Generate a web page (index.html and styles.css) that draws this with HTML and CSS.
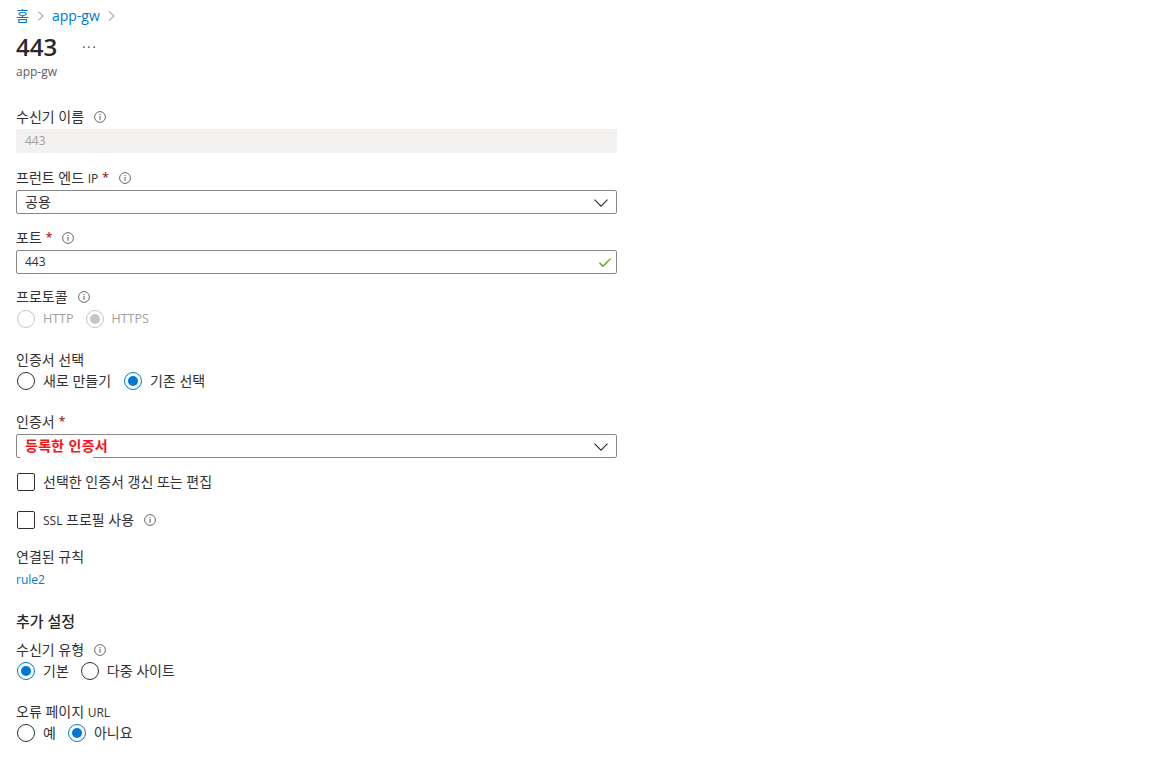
FILE: index.html
```html
<!DOCTYPE html>
<html lang="ko">
<head>
    <meta charset="UTF-8">
    <title>443 - app-gw</title>
    <link rel="stylesheet" href="styles.css">
</head>
<body>

<svg class="defs">
    <symbol id="info" viewBox="0 0 12 12">
        <circle cx="6" cy="6" r="5.4" fill="none" stroke="#6b6a69" stroke-width="1"/>
        <rect x="5.5" y="5" width="1.1" height="3.8" fill="#6b6a69"/>
        <rect x="5.5" y="3" width="1.1" height="1.2" fill="#6b6a69"/>
    </symbol>
    <symbol id="chevron" viewBox="0 0 14 8">
        <path d="M.5.7 7 7.2 13.5.7" fill="none" stroke="#2b2a29" stroke-width="1.1"/>
    </symbol>
</svg>

<nav class="breadcrumb">
    <a href="#">홈</a>
    <svg class="crumb-sep" viewBox="0 0 7 12"><path d="M1 1.5l5 4.5-5 4.5" fill="none" stroke="#8a8886"/></svg>
    <a href="#">app-gw</a>
    <svg class="crumb-sep" viewBox="0 0 7 12"><path d="M1 1.5l5 4.5-5 4.5" fill="none" stroke="#8a8886"/></svg>
</nav>

<div class="title-row">
    <h1>443</h1>
    <span class="more">···</span>
</div>
<div class="subtitle">app-gw</div>

<form class="form">
    <div class="label first"><span>수신기 이름</span><svg class="info"><use href="#info"/></svg></div>
    <div class="input readonly lat">443</div>

    <div class="label mt17"><span>프런트 엔드 <span class="lat">IP</span></span><span class="req">*</span><svg class="info"><use href="#info"/></svg></div>
    <div class="input">공용<svg class="chev"><use href="#chevron"/></svg></div>

    <div class="label mt16"><span>포트</span><span class="req">*</span><svg class="info"><use href="#info"/></svg></div>
    <div class="input lat">443<svg class="check" viewBox="0 0 12 9"><path d="M.5 4.8 3.9 8.3 11.5.6" fill="none" stroke="#57a300" stroke-width="1.3"/></svg></div>

    <div class="label mt15"><span>프로토콜</span><svg class="info"><use href="#info"/></svg></div>
    <div class="radios mt5 tight disabled">
        <label class="radio lat"><span class="dot"></span>HTTP</label>
        <label class="radio lat on"><span class="dot"></span>HTTPS</label>
    </div>

    <div class="label mt24"><span>인증서 선택</span></div>
    <div class="radios mt4">
        <label class="radio"><span class="dot"></span>새로 만들기</label>
        <label class="radio on"><span class="dot"></span>기존 선택</label>
    </div>

    <div class="label mt24"><span>인증서</span><span class="req">*</span></div>
    <div class="input cert"><span class="cert-name">등록한 인증서</span><svg class="chev"><use href="#chevron"/></svg></div>

    <label class="checkbox mt15"><span class="box"></span>선택한 인증서 갱신 또는 편집</label>
    <label class="checkbox mt20"><span class="box"></span><span><span class="lat">SSL</span> 프로필 사용</span><svg class="info"><use href="#info"/></svg></label>

    <div class="label mt20"><span>연결된 규칙</span></div>
    <a class="rule lat" href="#">rule2</a>

    <h2>추가 설정</h2>

    <div class="label mt13"><span>수신기 유형</span><svg class="info"><use href="#info"/></svg></div>
    <div class="radios mt4 tight">
        <label class="radio on"><span class="dot"></span>기본</label>
        <label class="radio"><span class="dot"></span>다중 사이트</label>
    </div>

    <div class="label mt24"><span>오류 페이지 <span class="lat">URL</span></span></div>
    <div class="radios mt4 tight">
        <label class="radio"><span class="dot"></span>예</label>
        <label class="radio on"><span class="dot"></span>아니요</label>
    </div>
</form>

</body>
</html>
```

FILE: styles.css
```css
body {
    margin: 0;
    padding: 8px 16px 0;
    background-color: #fff;
    color: #323130;
    font-family: "Open Sans", "Noto Sans CJK KR", sans-serif;
    font-size: 14px;
}

a {
    color: #0078d4;
    text-decoration: none;
}

/* Latin text runs smaller than the hangul around it */
.lat {
    font-size: 12px;
}

.defs {
    display: none;
}

/* Header */
.breadcrumb {
    display: flex;
    align-items: center;
    height: 16px;
    gap: 8px;
    line-height: 16px;
}

.crumb-sep {
    width: 7px;
    height: 12px;
}

.title-row {
    display: flex;
    align-items: center;
    height: 32px;
    margin-top: 7px;
}

h1 {
    margin: 0;
    font-size: 24px;
    font-weight: 600;
    line-height: 32px;
    color: #292827;
}

.more {
    margin-left: 25px;
    font-size: 12px;
    letter-spacing: 2px;
}

.subtitle {
    margin-top: 1px;
    font-size: 12px;
    line-height: 16px;
    color: #605e5c;
}

/* Form */
.form {
    width: 601px;
}

.label {
    display: flex;
    align-items: center;
    height: 16px;
    line-height: 16px;
    white-space: pre;
}

.first { margin-top: 29px; margin-bottom: 4px; }
.mt4 { margin-top: 4px; }
.mt5 { margin-top: 5px; }
.mt13 { margin-top: 13px; }
.mt15 { margin-top: 15px; }
.mt16 { margin-top: 16px; }
.mt17 { margin-top: 17px; }
.mt20 { margin-top: 20px; }
.mt24 { margin-top: 24px; }

.label + .input {
    margin-top: 4px;
}

.req {
    margin-left: 4px;
    color: #a4262c;
    font-size: 12px;
    font-weight: 600;
}

.info {
    width: 12px;
    height: 12px;
    margin-left: 10px;
    flex: none;
}

.input {
    position: relative;
    display: flex;
    align-items: center;
    box-sizing: border-box;
    height: 24px;
    padding: 0 8px;
    border: 1px solid #8a8886;
    border-radius: 2px;
    line-height: 22px;
}

.readonly {
    border-color: #f3f2f1;
    background-color: #f3f2f1;
    color: #a19f9d;
}

.chev {
    position: absolute;
    top: 8px;
    right: 8px;
    width: 14px;
    height: 8px;
}

.check {
    position: absolute;
    top: 7px;
    right: 5px;
    width: 12px;
    height: 9px;
}

/* Redacted value: a patch hides part of the bottom border */
.cert-name {
    color: #f5141e;
    font-size: 14px;
    font-weight: 700;
    letter-spacing: .3px;
}

.cert::after {
    content: "";
    position: absolute;
    left: 3px;
    bottom: -1px;
    width: 73px;
    height: 2px;
    background-color: #fff;
}

/* Radios */
.radios {
    display: flex;
    gap: 13px;
    padding-left: 1px;
}

.radios.tight {
    gap: 12px;
}

.radio,
.checkbox {
    display: flex;
    align-items: center;
    height: 18px;
    line-height: 18px;
    white-space: pre;
}

.radio.lat {
    font-size: 12.5px;
}

.dot {
    box-sizing: border-box;
    display: flex;
    align-items: center;
    justify-content: center;
    width: 18px;
    height: 18px;
    margin-right: 8px;
    border: 1px solid #323130;
    border-radius: 50%;
}

.radio.on .dot {
    border-color: #0078d4;
}

.radio.on .dot::after {
    content: "";
    width: 10px;
    height: 10px;
    border-radius: 50%;
    background-color: #0078d4;
}

.disabled .radio {
    color: #a19f9d;
}

.disabled .dot,
.disabled .radio.on .dot {
    border-color: #c8c6c4;
}

.disabled .radio.on .dot::after {
    background-color: #c8c6c4;
}

/* Checkboxes */
.checkbox {
    padding-left: 1px;
}

.box {
    box-sizing: border-box;
    width: 18px;
    height: 18px;
    margin-right: 8px;
    border: 1px solid #323130;
    border-radius: 2px;
}

.rule {
    display: block;
    margin-top: 7px;
    line-height: 16px;
}

h2 {
    margin: 25px 0 0;
    font-size: 15px;
    font-weight: 500;
    line-height: 16px;
    color: #292827;
}
```
